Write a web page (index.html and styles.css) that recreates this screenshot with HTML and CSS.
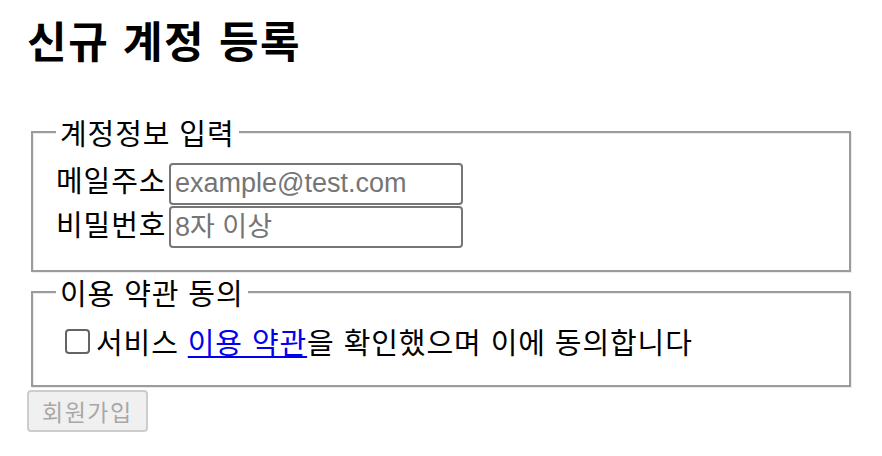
FILE: index.html
```html
<!DOCTYPE html>
<html lang="ko">
<head>
<meta charset="utf-8">
<title>신규 계정 등록</title>
<link rel="stylesheet" href="styles.css">
</head>
<body>
<h1 class="title">신규 계정 등록</h1>
<form class="signup">
  <fieldset class="group">
    <legend class="group-title">계정정보 입력</legend>
    <div class="fields">
      <div class="field">
        <label class="field-label" for="email">메일주소</label>
        <input class="field-input" id="email" type="email" placeholder="example@test.com">
      </div>
      <div class="field">
        <label class="field-label" for="pw">비밀번호</label>
        <input class="field-input" id="pw" type="password" placeholder="8자 이상">
      </div>
    </div>
  </fieldset>
  <fieldset class="group group-terms">
    <legend class="group-title">이용 약관 동의</legend>
    <label class="agree">
      <input class="agree-box" type="checkbox">
      <span class="agree-text">서비스 <a class="terms-link" href="#">이용 약관</a>을 확인했으며 이에 동의합니다</span>
    </label>
  </fieldset>
  <button class="submit" type="submit" disabled>회원가입</button>
</form>
</body>
</html>
```

FILE: styles.css
```css
html, body {
  background: #ffffff;
}
body {
  margin: 0;
  padding: 0 27px;
  font-family: "Noto Sans CJK KR", "Liberation Sans", sans-serif;
  font-size: 29px;
  letter-spacing: 0.9px;
  color: #000000;
}
.title {
  margin: 11px 0 50px;
  font-size: 43px;
  line-height: 56px;
  font-weight: 700;
  letter-spacing: 1.6px;
}
.signup {
  margin: 0;
}
.group {
  margin: 0 4px;
  padding: 15px 20px 22px 23px;
  border: 2px solid #9b9b9b;
  box-shadow: inset 1px 1px 0 #ececec, 1px 1px 0 #ececec;
  min-width: 0;
}
.group-title {
  padding: 0 4px;
  line-height: 30px;
  background: #ffffff;
}
.fields {
  display: flex;
  flex-direction: column;
  gap: 1px;
}
.field {
  display: flex;
  align-items: baseline;
}
.field-label {
  width: 113px;
  line-height: 34px;
}
.field-input {
  box-sizing: border-box;
  width: 294px;
  height: 42px;
  margin: 0;
  padding: 2px 4px;
  border: 2px solid #767676;
  border-radius: 4px;
  font-family: "Liberation Sans", "Noto Sans CJK KR", sans-serif;
  font-size: 27px;
  letter-spacing: 0;
  color: #000;
  background: #fff;
}
.field-input::placeholder {
  color: #757575;
}
.group-terms {
  margin-top: 5px;
  padding-top: 14px;
  padding-bottom: 24px;
}
.agree {
  display: flex;
  align-items: center;
  gap: 6px;
  line-height: 40px;
}
.agree-box {
  appearance: none;
  -webkit-appearance: none;
  box-sizing: border-box;
  width: 25px;
  height: 25px;
  margin: 0 0 0 9px;
  border: 2px solid #646464;
  border-radius: 4px;
  background: #fff;
}
.terms-link {
  color: #0000ee;
  text-decoration: underline;
}
.submit {
  margin: 1px 0 0;
  box-sizing: border-box;
  height: 42px;
  padding: 0 13px;
  border: 2px solid #cdcdcd;
  border-radius: 4px;
  background: #f0f0f0;
  color: #a8a8a8;
  font-family: "Noto Sans CJK KR", sans-serif;
  font-size: 23px;
  letter-spacing: 1.5px;
  line-height: 34px;
}
```
